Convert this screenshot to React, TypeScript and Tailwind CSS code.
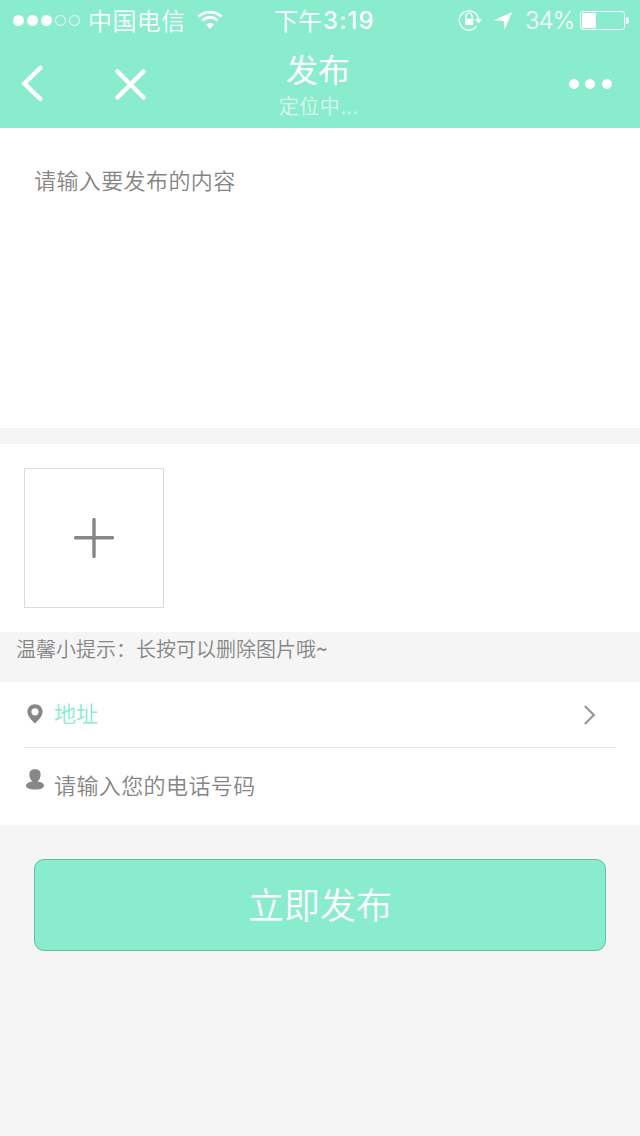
import React from 'react';

function SignalDots() {
  return (
    <svg className="ml-3 h-4 w-[70px] shrink-0" viewBox="0 0 70 16" fill="#fff">
      <circle cx="6.5" cy="8.5" r="5.5" />
      <circle cx="20.5" cy="8.5" r="5.5" />
      <circle cx="34.5" cy="8.5" r="5.5" />
      <circle cx="48.5" cy="8.5" r="5" fill="none" stroke="#fff" />
      <circle cx="62.5" cy="8.5" r="5" fill="none" stroke="#fff" />
    </svg>
  );
}

function WifiIcon() {
  return (
    <svg className="ml-[11px] h-5 w-[26px] shrink-0" viewBox="0 0 26 20">
      <g fill="none" stroke="#fff" strokeWidth="2.7">
        <path d="M1.4 6.7C8 .5 18 .5 24.6 6.7" />
        <path d="M5.2 10.5c4.5-4.1 11.1-4.1 15.6 0" />
      </g>
      <path d="M8.9 14.6c2.3-2.2 5.9-2.2 8.2 0L13 18.9Z" fill="#fff" />
    </svg>
  );
}

function RotationLockIcon() {
  return (
    <svg className="h-6 w-6 shrink-0" viewBox="0 0 24 24" fill="none" stroke="#fff">
      <path d="M18.6 18.2A9.6 9.6 0 1 1 20.4 11" strokeWidth="1.2" />
      <path d="M17 11h7l-3.5 4.4Z" fill="#fff" stroke="none" />
      <path d="M8 11V8.3a3.1 3.1 0 0 1 6.2 0V11" strokeWidth="1.3" />
      <rect x="7" y="10.8" width="8.3" height="6.2" rx=".5" fill="#fff" stroke="none" />
    </svg>
  );
}

function StatusBar() {
  return (
    <div className="flex h-10 items-center text-2xl leading-10 whitespace-nowrap">
      <div className="flex w-[274px] shrink-0 items-center">
        <SignalDots />
        <span className="ml-1.5 font-[350] tracking-[0.4px]">中国电信</span>
        <WifiIcon />
      </div>
      <div className="flex w-[184px] shrink-0 font-normal">
        下午<span className="mt-px ml-px font-[Inter] font-medium tracking-[1.1px]">3:19</span>
      </div>
      <RotationLockIcon />
      <svg className="ml-3 h-5 w-5 shrink-0" viewBox="0 0 20 20">
        <path d="M18.2 2 0 10.3l9.7.7.8 9Z" fill="#fff" />
      </svg>
      <span className="mt-0.5 ml-[11px] w-[55px] shrink-0 font-[Inter] font-light tracking-[-1px]">34%</span>
      <svg className="h-5 w-[50px] shrink-0" viewBox="0 0 50 20">
        <rect x=".5" y="1.5" width="44" height="18" rx="2.5" fill="none" stroke="#fff" />
        <rect x="2" y="3" width="14" height="15" rx="1" fill="#fff" />
        <path d="M46 7c4 0 4 7 0 7Z" fill="#fff" />
      </svg>
    </div>
  );
}

function Header() {
  return (
    <header className="h-32 bg-[#89eccd] text-white">
      <StatusBar />
      <div className="flex h-[88px]">
        <svg className="mt-6 ml-5 h-10 w-6 shrink-0" viewBox="0 0 24 40">
          <path d="M20.3 4 4.3 19.5l16 15.5" fill="none" stroke="#fff" strokeWidth="4.5" strokeLinecap="round" />
        </svg>
        <svg className="mt-6 ml-[66px] h-10 w-10 shrink-0" viewBox="0 0 40 40">
          <path d="m7.5 7.5 26 26M33.500 7.500l-26 26" fill="none" stroke="#fff" strokeWidth="4.5" strokeLinecap="round" />
        </svg>
        <div className="ml-[68px] flex w-[200px] shrink-0 flex-col items-center">
          <h1 className="mt-2 h-[42px] text-[32px] leading-10 font-normal">发布</h1>
          <p className="h-8 pl-px text-xl leading-8 font-[350] tracking-[0.6px] text-white/70">定位中...</p>
        </div>
        <svg className="mt-[34px] ml-[150px] h-5 w-[46px] shrink-0" viewBox="0 0 46 20" fill="#fff">
          <circle cx="6" cy="10" r="5" />
          <circle cx="22" cy="10" r="5" />
          <circle cx="39" cy="10" r="5" />
        </svg>
      </div>
    </header>
  );
}

export default function App() {
  return (
    <div className="h-[1136px] w-[640px] overflow-hidden bg-[#f5f5f5] font-['Noto_Sans_CJK_SC',sans-serif] text-[#858585]">
      <Header />
      <section className="h-[300px] bg-white pt-[35px] pl-[34px]">
        <p className="text-[22px] leading-8 font-[350] tracking-[0.4px]">请输入要发布的内容</p>
      </section>
      <section className="mt-4 h-[188px] bg-white p-6">
        <button className="flex size-[140px] items-center justify-center border border-[#dadada]">
          <svg className="size-10" viewBox="0 0 40 40">
            <path d="M20 1.6v36.8M1.6 19.8h36.8" stroke="#878787" strokeWidth="3.4" strokeLinecap="round" />
          </svg>
        </button>
      </section>
      <p className="h-[50px] pl-4 text-xl leading-[34px] font-[350] whitespace-nowrap">
        温馨小提示：长按可以删除图片哦<span className="font-medium">~</span>
      </p>
      <section className="h-[143px] bg-white px-6">
        <div className="flex h-[66px] items-center border-b border-[#e6e6e6]">
          <svg className="mb-0.5 ml-[3px] h-5 w-4" viewBox="0 0 16 20">
            <path
              d="M8 .3C3.7.3.4 3.500.4 7.600c0 4.300 3.800 8.300 7.600 12 3.800-3.700 7.600-7.700 7.600-12C15.600 3.500 12.300.3 8 .3Zm0 3.900a3.600 3.600 0 1 1 0 7.200 3.600 3.600 0 0 1 0-7.200Z"
              fill="#878787"
              fillRule="evenodd"
            />
          </svg>
          <span className="mb-1.5 ml-[11px] text-[22px] leading-8 font-[350] text-[#89eccd]">地址</span>
          <svg className="mr-5 ml-auto h-6 w-3" viewBox="0 0 12 24">
            <path d="m.8 3 9 9-9 9" fill="none" stroke="#999" strokeWidth="2.3" />
          </svg>
        </div>
        <div className="flex h-[77px]">
          <svg className="mt-5 ml-[1px] h-6 w-5" viewBox="0 0 20 24" fill="#878787">
            <path d="M10 1.200c-3.700 0-5.800 2-5.600 5.600.1 2.800 1.100 4.900 2.900 6.400V16h5.400v-2.800c1.800-1.500 2.800-3.600 2.900-6.400.2-3.600-1.900-5.600-5.600-5.600Z" />
            <path d="M7.300 13.500C3.500 13.800 1 15.500 1 17.700c0 2.300 3.500 3.900 9 3.900s9-1.600 9-3.900c0-2.200-2.500-3.900-6.300-4.200Z" />
          </svg>
          <span className="mt-5 ml-[9px] text-[22px] leading-8 font-[350] tracking-[0.4px]">
            请输入您的电话号码
          </span>
        </div>
      </section>
      <button className="mt-[34px] ml-[34px] flex h-[92px] w-[572px] items-center justify-center rounded-[10px] border border-[#65be9f] bg-[#89eccd] pb-1 text-4xl leading-[86px] font-[350] text-white">
        立即发布
      </button>
    </div>
  );
}
